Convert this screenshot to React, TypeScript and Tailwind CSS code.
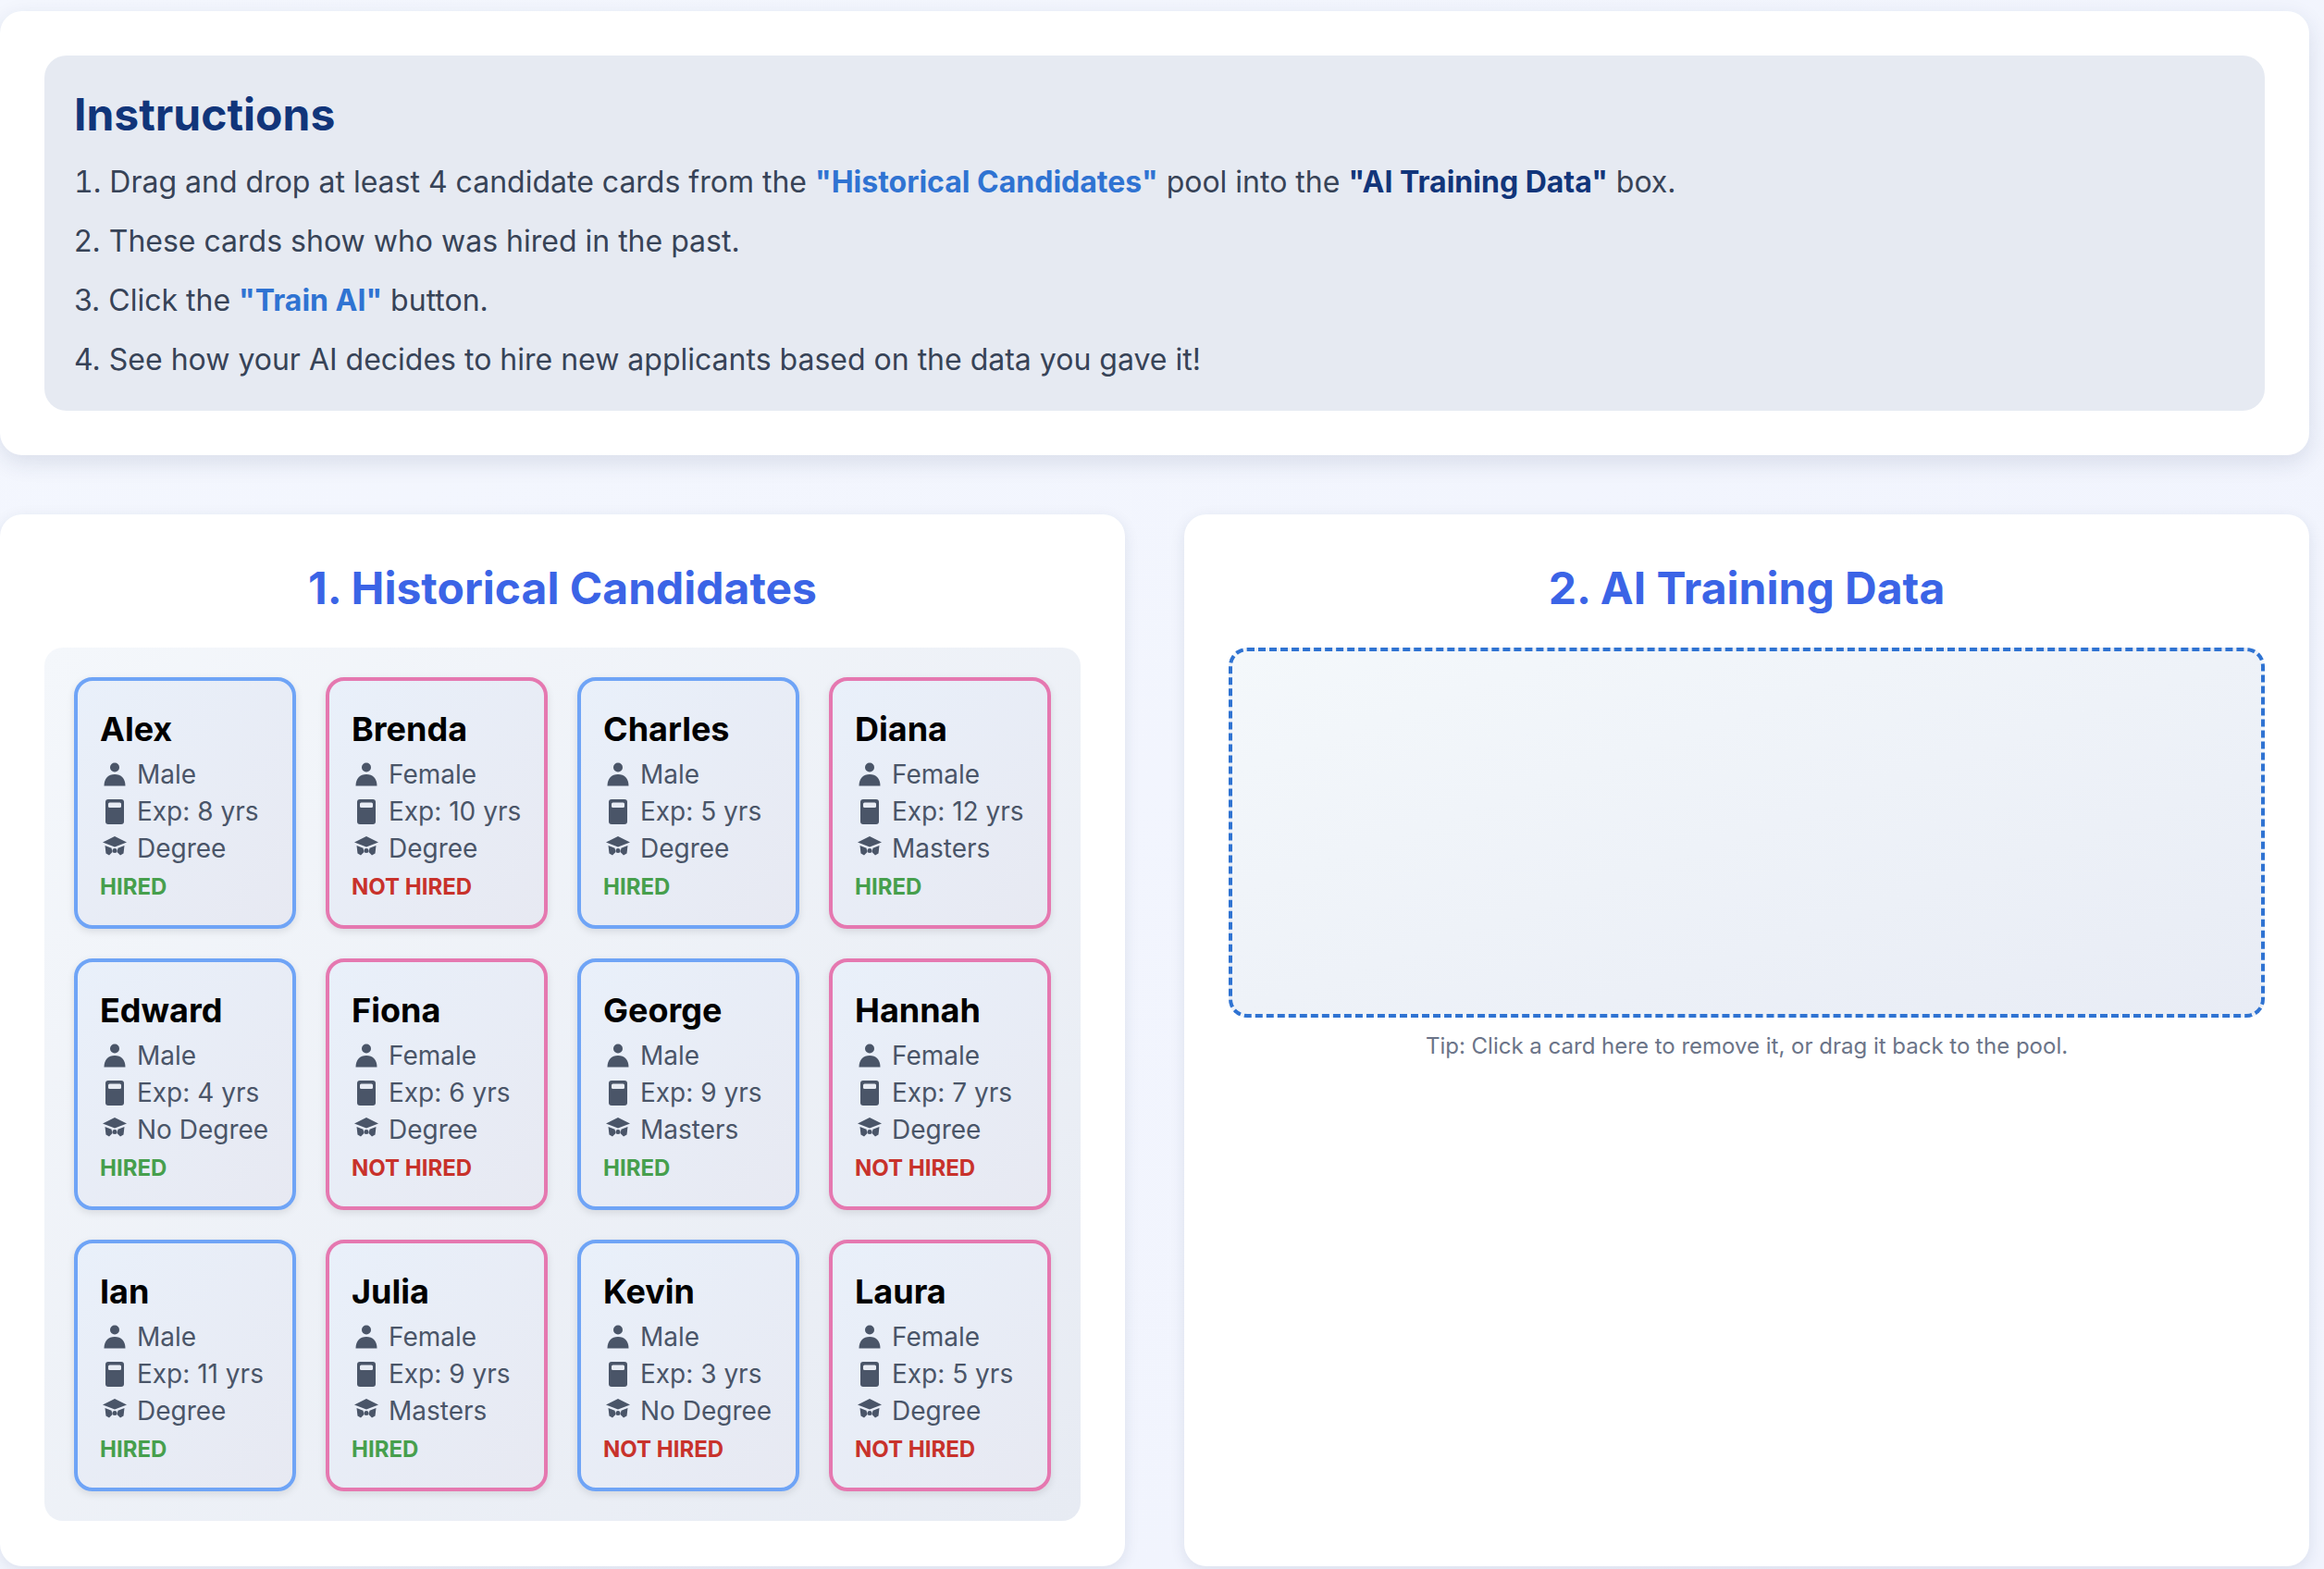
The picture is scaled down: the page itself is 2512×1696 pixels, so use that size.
const candidates = [
  { name: 'Alex', gender: 'Male', exp: 8, edu: 'Degree', hired: true },
  { name: 'Brenda', gender: 'Female', exp: 10, edu: 'Degree', hired: false },
  { name: 'Charles', gender: 'Male', exp: 5, edu: 'Degree', hired: true },
  { name: 'Diana', gender: 'Female', exp: 12, edu: 'Masters', hired: true },
  { name: 'Edward', gender: 'Male', exp: 4, edu: 'No Degree', hired: true },
  { name: 'Fiona', gender: 'Female', exp: 6, edu: 'Degree', hired: false },
  { name: 'George', gender: 'Male', exp: 9, edu: 'Masters', hired: true },
  { name: 'Hannah', gender: 'Female', exp: 7, edu: 'Degree', hired: false },
  { name: 'Ian', gender: 'Male', exp: 11, edu: 'Degree', hired: true },
  { name: 'Julia', gender: 'Female', exp: 9, edu: 'Masters', hired: true },
  { name: 'Kevin', gender: 'Male', exp: 3, edu: 'No Degree', hired: false },
  { name: 'Laura', gender: 'Female', exp: 5, edu: 'Degree', hired: false },
];

function PersonIcon() {
  return (
    <svg viewBox="0 0 24 26" className="h-[26px] w-6 fill-[#4a5568]">
      <circle cx="12" cy="5.500" r="5" />
      <path d="M.5 25.500c0-8 4.500-12.500 11.500-12.500s11.500 4.500 11.500 12.500z" />
    </svg>
  );
}

function BookIcon() {
  return (
    <svg viewBox="0 0 20 27" className="h-[27px] w-5">
      <rect width="20" height="27" rx="3" className="fill-[#4a5568]" />
      <rect x="3" y="3.500" width="14" height="5.500" rx="1.500" className="fill-[#e8ecf4]" />
    </svg>
  );
}

function CapIcon() {
  return (
    <svg viewBox="0 0 26 21" className="-mt-[5px] h-[21px] w-[26px] fill-[#4a5568]">
      <path d="M13 0 26 6.500 13 11.500 0 6.500z" />
      <path d="M2.500 10 9.500 12.800 10.500 17 7 20.500 3.500 18.500z" />
      <path d="M23.500 10 16.500 12.800 15.500 17 19 20.500 22.500 18.500z" />
      <circle cx="13" cy="15.500" r="2.500" />
    </svg>
  );
}

function Candidate({ c }: { c: (typeof candidates)[number] }) {
  const border = c.gender === 'Male' ? 'border-[#6fa4f6]' : 'border-[#e578b0]';
  return (
    <div className={`h-[272px] rounded-[20px] border-4 ${border} bg-gradient-to-br from-[#e9f0fa] to-[#e7e9f2] px-6 pt-[27px] shadow-[0_3px_8px_rgba(0,0,0,0.1)]`}>
      <div className="text-[36px] font-bold leading-[50px] text-black">{c.name}</div>
      <div className="mt-[4px] flex h-10 items-center gap-2 text-[28px] text-[#4a5568]">
        <span className="flex w-8 justify-center"><PersonIcon /></span>
        <span>{c.gender}</span>
      </div>
      <div className="flex h-10 items-center gap-2 text-[28px] text-[#4a5568]">
        <span className="flex w-8 justify-center"><BookIcon /></span>
        <span>Exp: {c.exp} yrs</span>
      </div>
      <div className="flex h-10 items-center gap-2 text-[28px] text-[#4a5568]">
        <span className="flex w-8 justify-center"><CapIcon /></span>
        <span>{c.edu}</span>
      </div>
      <div className={`mt-[6px] text-[24px] font-bold leading-[32px] ${c.hired ? 'text-[#479f4d]' : 'text-[#c8322b]'}`}>
        {c.hired ? 'HIRED' : 'NOT HIRED'}
      </div>
    </div>
  );
}

export default function App() {
  return (
    <div className="h-[1696px] overflow-hidden bg-gradient-to-br from-[#f4f7fe] to-[#f0f3fd] pt-3 pr-4 font-['Inter',sans-serif]">
      {/* Instructions */}
      <div className="rounded-[24px] bg-white p-12 shadow-[0_8px_24px_rgba(30,50,90,0.12)]">
        <div className="h-[384px] rounded-[24px] bg-[#e6eaf2] px-8 pt-[35px] text-[32px] leading-[64px] text-[#374357]">
          <h2 className="text-[48px] font-bold leading-[58px] text-[#11357a]">Instructions</h2>
          <p className="mt-[12px]">
            <span className="tabular-nums">1.</span> Drag and drop at least 4 candidate cards from the{' '}
            <strong className="font-bold text-[#2f73d2]">"Historical Candidates"</strong> pool into the{' '}
            <strong className="font-bold text-[#11357a]">"AI Training Data"</strong> box.
          </p>
          <p>2. These cards show who was hired in the past.</p>
          <p>
            3. Click the <strong className="font-bold text-[#2f73d2]">"Train AI"</strong> button.
          </p>
          <p>4. See how your AI decides to hire new applicants based on the data you gave it!</p>
        </div>
      </div>

      <div className="mt-16 grid grid-cols-2 gap-16">
        {/* Pool */}
        <div className="h-[1137px] rounded-[24px] bg-white px-12 pt-[48px] shadow-[0_4px_16px_rgba(30,50,90,0.1)]">
          <h2 className="text-center text-[48px] font-bold leading-[64px] text-[#3b64e6]">1. Historical Candidates</h2>
          <div className="mt-[32px] grid grid-cols-4 gap-8 rounded-[20px] bg-gradient-to-br from-[#f4f7fb] to-[#e7ebf3] p-8">
            {candidates.map((c) => (
              <Candidate key={c.name} c={c} />
            ))}
          </div>
        </div>

        {/* Training data */}
        <div className="h-[1137px] rounded-[24px] bg-white px-12 pt-[48px] shadow-[0_4px_16px_rgba(30,50,90,0.1)]">
          <h2 className="text-center text-[48px] font-bold leading-[64px] text-[#3b64e6]">2. AI Training Data</h2>
          <div className="mt-[32px] h-[400px] rounded-[20px] border-4 border-dashed border-[#2f73d2] bg-gradient-to-br from-[#f4f8fb] to-[#e8ecf5]" />
          <p className="mt-[16px] text-center text-[24px] leading-[30px] text-[#6b7488]">
            Tip: Click a card here to remove it, or drag it back to the pool.
          </p>
        </div>
      </div>
    </div>
  );
}
